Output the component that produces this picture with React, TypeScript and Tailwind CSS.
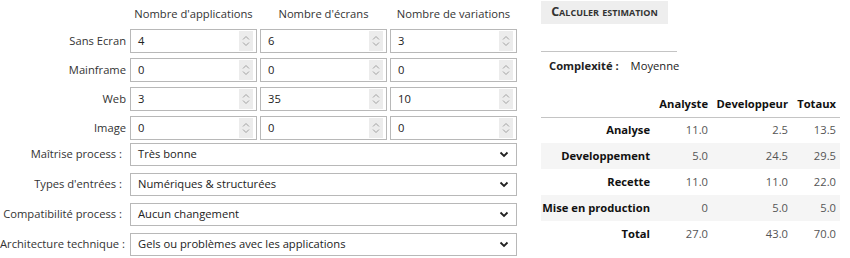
import React from "react";

const numberRows = [
  { label: "Sans Ecran", values: ["4", "6", "3"] },
  { label: "Mainframe", values: ["0", "0", "0"] },
  { label: "Web", values: ["3", "35", "10"] },
  { label: "Image", values: ["0", "0", "0"] },
];

const selectRows = [
  { label: "Maîtrise process :", value: "Très bonne" },
  { label: "Types d'entrées :", value: "Numériques & structurées" },
  { label: "Compatibilité process :", value: "Aucun changement" },
  { label: "Architecture technique :", value: "Gels ou problèmes avec les applications" },
];

const tableRows = [
  { name: "Analyse", a: "11.0", d: "2.5", t: "13.5" },
  { name: "Developpement", a: "5.0", d: "24.5", t: "29.5" },
  { name: "Recette", a: "11.0", d: "11.0", t: "22.0" },
  { name: "Mise en production", a: "0", d: "5.0", t: "5.0" },
  { name: "Total", a: "27.0", d: "43.0", t: "70.0" },
];

const Spinner: React.FC = () => (
  <div className="flex h-[20px] w-[14px] flex-col items-center justify-center gap-[2px] bg-[#ececec]">
    <svg width="8" height="5" viewBox="0 0 8 5" fill="none">
      <path d="M1 4.5L4 1.5L7 4.5" stroke="#a0a0a0" strokeWidth="1" />
    </svg>
    <svg width="8" height="5" viewBox="0 0 8 5" fill="none">
      <path d="M1 0.5L4 3.5L7 0.5" stroke="#a0a0a0" strokeWidth="1" />
    </svg>
  </div>
);

const NumberBox: React.FC<{ value: string }> = ({ value }) => (
  <div className="flex h-[24px] w-[127px] items-center justify-between border border-[#b8b8b8] bg-white pl-[7px] pr-[3px] text-[#222]">
    <span>{value}</span>
    <Spinner />
  </div>
);

const Chevron: React.FC = () => (
  <svg width="10" height="7" viewBox="0 0 10 7" fill="none">
    <path d="M1.5 1.5L5 5L8.5 1.5" stroke="#222" strokeWidth="1.8" />
  </svg>
);

export default function App() {
  return (
    <div className="flex h-[258px] w-[850px] items-start overflow-hidden whitespace-nowrap bg-white font-['Open_Sans',sans-serif] text-[11.2px] text-[#333]">
      <div className="flex w-[541px] shrink-0 flex-col">
        <div className="flex h-[28px] shrink-0 items-center pl-[130px]">
          <div className="w-[127px] text-center">Nombre d'applications</div>
          <div className="ml-[3px] w-[127px] text-center">Nombre d'écrans</div>
          <div className="ml-[3px] w-[127px] text-center">Nombre de variations</div>
        </div>
        <div className="flex shrink-0 flex-col gap-[5px] pt-[1px]">
          {numberRows.map((r) => (
            <div key={r.label} className="flex items-center">
              <div className="w-[127px] pr-[1px] text-right">{r.label}</div>
              <div className="ml-[3px] flex gap-[3px]">
                {r.values.map((v, i) => (
                  <NumberBox key={i} value={v} />
                ))}
              </div>
            </div>
          ))}
        </div>
        <div className="mt-[3px] flex shrink-0 flex-col gap-[7px]">
          {selectRows.map((r) => (
            <div key={r.label} className="flex items-center">
              <div className="w-[122px] text-right">{r.label}</div>
              <div className="ml-[8px] flex h-[23px] w-[387px] items-center justify-between border border-[#b8b8b8] bg-white pl-[7px] pr-[7px] text-[#222]">
                <span>{r.value}</span>
                <Chevron />
              </div>
            </div>
          ))}
        </div>
      </div>

      <div className="flex w-[299px] shrink-0 flex-col">
        <button className="mt-[1px] flex h-[23px] w-[127px] shrink-0 items-center justify-center bg-[#eeeeee] text-[12.5px] font-bold text-[#333] [font-variant:small-caps]">
          Calculer estimation
        </button>
        <div className="mt-[27px] h-px w-[136px] shrink-0 bg-[#c4c4c4]" />
        <div className="mt-[5px] flex h-[18px] shrink-0 items-center pl-[8px] text-[#222]">
          <span className="font-bold">Complexité :</span>
          <span className="ml-[12px]">Moyenne</span>
        </div>
        <table className="mt-[17px] w-[299px] shrink-0 border-collapse">
          <thead>
            <tr className="h-[25px] border-b border-[#c4c4c4] text-[#111]">
              <th className="w-[117px]"></th>
              <th className="w-[58px] pr-2 text-right font-bold">Analyste</th>
              <th className="w-[80px] pr-2 text-right font-bold">Developpeur</th>
              <th className="w-[44px] pr-[4px] text-right font-bold">Totaux</th>
            </tr>
          </thead>
          <tbody>
            {tableRows.map((r, i) => (
              <tr key={r.name} className={i % 2 === 1 ? "h-[26px] bg-[#f5f5f5]" : "h-[26px]"}>
                <th className="pr-2 text-right font-bold text-[#111]">{r.name}</th>
                <td className="pr-2 text-right text-[#555]">{r.a}</td>
                <td className="pr-2 text-right text-[#555]">{r.d}</td>
                <td className="pr-[4px] text-right text-[#555]">{r.t}</td>
              </tr>
            ))}
          </tbody>
        </table>
      </div>
    </div>
  );
}
